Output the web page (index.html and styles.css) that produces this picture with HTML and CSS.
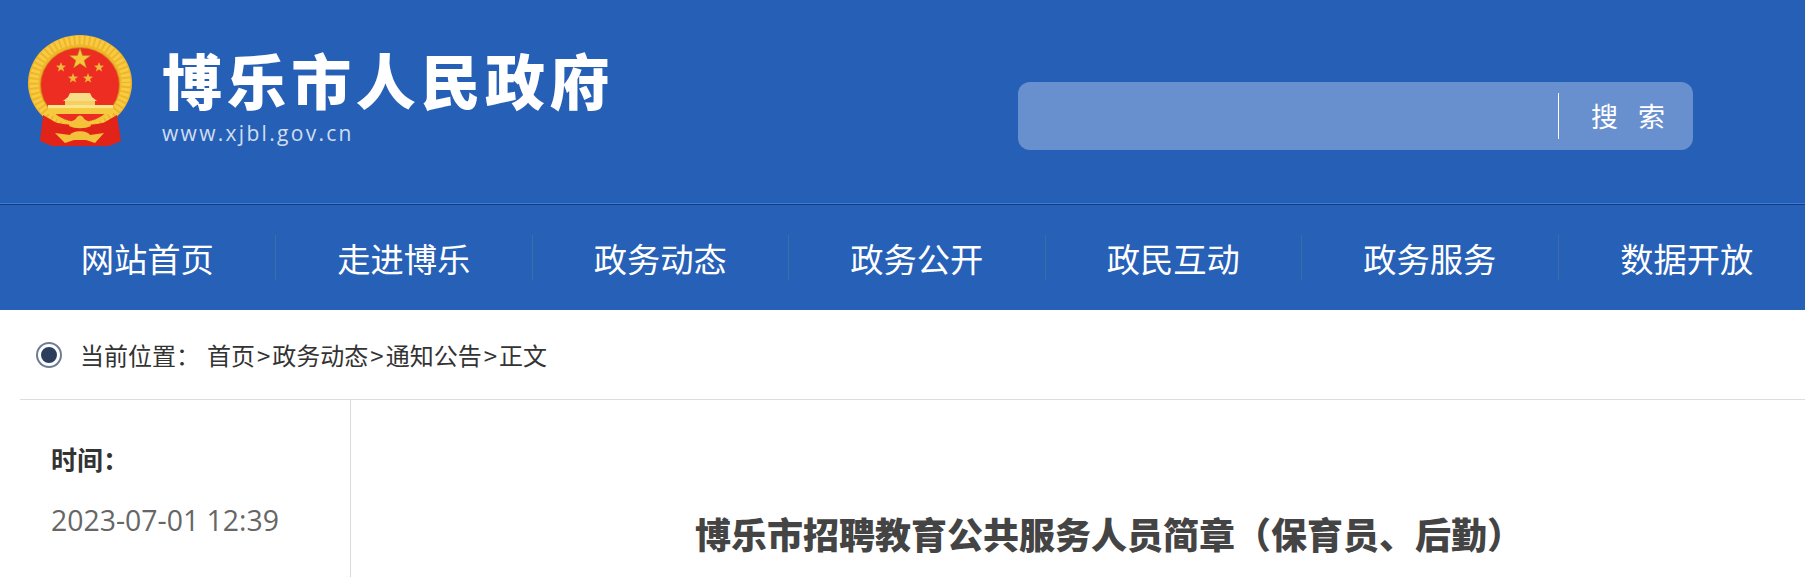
FILE: index.html
```html
<!DOCTYPE html>
<html lang="zh-CN">
<head>
    <meta charset="UTF-8">
    <meta name="viewport" content="width=device-width, initial-scale=1.0">
    <title>博乐市招聘教育公共服务人员简章（保育员、后勤）</title>
    <link rel="stylesheet" href="styles.css">
</head>
<body>
    <header class="top">
        <div class="brand">
            <svg class="emblem" viewBox="0 0 130 130" width="130" height="130" aria-hidden="true">
                <ellipse cx="65" cy="58" rx="52" ry="48" fill="#f0b62a"/>
                <ellipse cx="65" cy="58" rx="46" ry="43" fill="none" stroke="#f7cb44" stroke-width="9" stroke-dasharray="3 2"/>
                <ellipse cx="65" cy="60" rx="40" ry="38" fill="#cf8d1c"/>
                <ellipse cx="65" cy="60" rx="39" ry="37" fill="#ee2d22"/>
                <polygon fill="#f6c63a" stroke="#b8791b" stroke-width=".5" points="65,23 67.6,30.4 75.5,30.6 69.2,35.4 71.5,43 65,38.5 58.5,43 60.8,35.4 54.5,30.6 62.4,30.4"/>
                <polygon fill="#eeb93a" points="46,37 47.3,40.6 51,40.7 48.1,43 49.1,46.6 46,44.5 42.9,46.6 43.9,43 41,40.7 44.7,40.6"/>
                <polygon fill="#eeb93a" points="84,37 85.3,40.6 89,40.7 86.1,43 87.1,46.6 84,44.5 80.9,46.6 81.9,43 79,40.7 82.7,40.6"/>
                <polygon fill="#eeb93a" points="58,48 59.3,51.6 63,51.7 60.1,54 61.1,57.6 58,55.5 54.9,57.6 55.9,54 53,51.7 56.7,51.6"/>
                <polygon fill="#eeb93a" points="73,48 74.3,51.6 78,51.7 75.1,54 76.1,57.6 73,55.5 69.9,57.6 70.9,54 68,51.7 71.7,51.6"/>
                <polygon fill="#f8dc86" points="55,68 75,68 77,72 82,76 48,76 53,72"/>
                <rect x="50" y="76" width="30" height="4" fill="#f5cf62"/>
                <rect x="33" y="80" width="65" height="3" fill="#fbe48c"/>
                <rect x="33" y="83" width="65" height="6" fill="#f6c942"/>
                <path d="M28 90 L40 97 C48 101 82 101 90 97 L102 90 L106 116 L94 121 L37 121 L25 116 Z" fill="#e2231a"/>
                <path d="M38 89 C46 97 56 99 65 99 C74 99 84 97 92 89" fill="none" stroke="#f5c63c" stroke-width="3"/>
                <path d="M54 101 C55 94 60 97 62 92 C64 90 66 90 68 92 C70 97 75 94 76 101 C70 104 60 104 54 101 Z" fill="#f4c23a"/>
                <path d="M40 108 L55 110 C58 105 72 105 75 110 L89 108 L80 118 L71 115 L59 115 L50 118 Z" fill="#f4c23a"/>
            </svg>
            <div class="brand-text">
                <div class="brand-name">博乐市人民政府</div>
                <div class="brand-url">www.xjbl.gov.cn</div>
            </div>
        </div>
        <div class="search">
            <span class="search-btn">搜索</span>
        </div>
    </header>

    <nav class="nav">
        <a class="nav-item">网站首页</a>
        <a class="nav-item">走进博乐</a>
        <a class="nav-item">政务动态</a>
        <a class="nav-item">政务公开</a>
        <a class="nav-item">政民互动</a>
        <a class="nav-item">政务服务</a>
        <a class="nav-item">数据开放</a>
    </nav>

    <div class="crumb">
        <span class="crumb-icon"></span>
        <span class="crumb-label">当前位置：</span>
        <span>首页<span class="crumb-sep">&gt;</span>政务动态<span class="crumb-sep">&gt;</span>通知公告<span class="crumb-sep">&gt;</span>正文</span>
    </div>

    <main class="main">
        <aside class="side">
            <div class="side-label">时间：</div>
            <div class="side-date">2023-07-01 12:39</div>
        </aside>
        <article class="article">
            <h1>博乐市招聘教育公共服务人员简章（保育员、后勤）</h1>
        </article>
    </main>
</body>
</html>
```

FILE: styles.css
```css
html, body {
    margin: 0;
    height: 577px;
    overflow: hidden;
    background: #fff;
}

body {
    font-family: "Noto Sans CJK SC", "Noto Sans", sans-serif;
    color: #333;
}

.top {
    height: 203px;
    background: #2660b6;
    display: flex;
    justify-content: space-between;
    padding: 25px 112px 0 15px;
    box-sizing: border-box;
}

.brand {
    display: flex;
    gap: 17px;
}

.emblem {
    flex: none;
}

.brand-text {
    padding-top: 19px;
}

.brand-name {
    font-size: 60px;
    line-height: 70px;
    font-weight: 900;
    letter-spacing: 4.6px;
    color: #fff;
    white-space: nowrap;
}

.brand-url {
    font-family: "Open Sans", sans-serif;
    font-size: 21px;
    line-height: 26px;
    letter-spacing: 2.3px;
    color: #d0ddf1;
    margin-top: 6px;
}

.search {
    width: 675px;
    height: 68px;
    margin-top: 57px;
    background: #6990ce;
    border-radius: 12px;
    display: flex;
    justify-content: flex-end;
    align-items: center;
    padding-right: 28px;
    box-sizing: border-box;
}

.search-btn {
    width: 126px;
    height: 46px;
    line-height: 46px;
    border-left: 1px solid #fff;
    text-align: right;
    font-size: 27px;
    letter-spacing: 20px;
    color: #fff;
    margin-right: -20px;
}

.nav {
    height: 107px;
    background: #2760b7;
    border-top: 1px solid #3a7ae0;
    box-shadow: inset 0 1px 0 #143d80;
    box-sizing: border-box;
    display: flex;
    padding: 31px 0 0 19.5px;
}

.nav-item {
    flex: none;
    width: 256.5px;
    height: 45px;
    line-height: 45px;
    text-align: center;
    font-size: 33.3px;
    color: #fff;
    border-right: 1px solid #3b6ea8;
    box-sizing: border-box;
}

.nav-item:last-child {
    border-right: none;
}

.crumb {
    height: 89px;
    display: flex;
    align-items: center;
    padding-left: 38px;
    font-size: 24px;
    color: #333;
    box-sizing: border-box;
}

.crumb-icon {
    width: 16px;
    height: 16px;
    border-radius: 50%;
    background: #2c3e5e;
    border: 3px solid #fff;
    box-shadow: 0 0 0 2px #6f7d94;
    margin-right: 20px;
}

.crumb-label {
    width: 127px;
}

.crumb-sep {
    margin: 0 2px;
}

.main {
    margin-left: 20px;
    border-top: 1px solid #ddd;
    display: flex;
    height: 178px;
}

.side {
    width: 331px;
    padding: 42px 0 0 31px;
    border-right: 1px solid #d9d9d9;
    box-sizing: border-box;
}

.side-label {
    font-size: 26px;
    line-height: 34px;
    font-weight: 700;
    color: #333;
}

.side-date {
    font-size: 28.4px;
    line-height: 36px;
    color: #666;
    margin-top: 26px;
    font-family: "Open Sans", sans-serif;
    white-space: nowrap;
}

.article {
    flex: 1;
    padding: 108px 0 0 344px;
}

.article h1 {
    margin: 0;
    font-size: 36px;
    line-height: 50px;
    font-weight: 900;
    color: #444;
    white-space: nowrap;
}
```
